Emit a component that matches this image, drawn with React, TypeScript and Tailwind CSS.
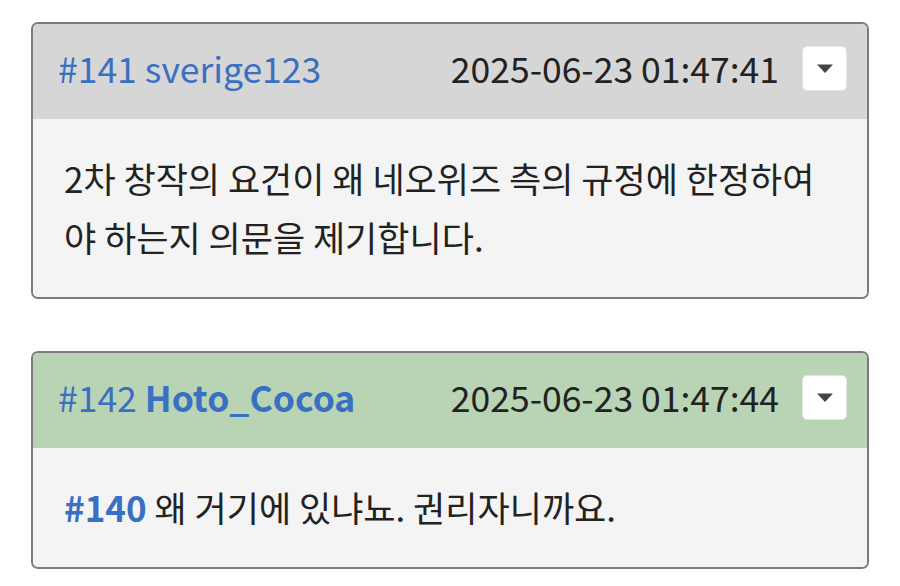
import { ReactNode } from 'react';

interface Comment {
  no: number;
  author: string;
  time: string;
  mine?: boolean;
  body: ReactNode;
}

const comments: Comment[] = [
  {
    no: 141,
    author: 'sverige123',
    time: '2025-06-23 01:47:41',
    body: '2차 창작의 요건이 왜 네오위즈 측의 규정에 한정하여야 하는지 의문을 제기합니다.',
  },
  {
    no: 142,
    author: 'Hoto_Cocoa',
    time: '2025-06-23 01:47:44',
    mine: true,
    body: (
      <>
        <a className="font-bold text-[#3a70c1]">#140</a> 왜 거기에 있냐뇨. 권리자니까요.
      </>
    ),
  },
];

function CommentCard({ c }: { c: Comment }) {
  return (
    <div className="border-2 border-[#7c7c7c] rounded-[7px] overflow-hidden">
      {/* header row */}
      <div
        className={`h-[95px] flex items-center pl-[25px] pr-[20px] pb-[7px] ${
          c.mine ? 'bg-[#b8d4b5]' : 'bg-[#d6d6d6]'
        }`}
      >
        <div className="flex-1 text-[#3a70c1] text-[35.5px]">
          <span>#{c.no}</span>{' '}
          <span className={c.mine ? 'font-bold' : ''}>{c.author}</span>
        </div>
        <div className="text-[35.5px] text-[#222]">{c.time}</div>
        <button className="ml-[23px] w-[45px] h-[45px] bg-white rounded-[5px] border border-[#e4e4e4] flex items-center justify-center">
          <svg width="18" height="11" viewBox="0 0 18 11">
            <path d="M1 1.5h16L9 10z" fill="#444" />
          </svg>
        </button>
      </div>
      {/* body */}
      <div className="bg-[#f4f4f4] px-[31px] pt-[29px] pb-[31px] text-[35px] leading-[59px] text-[#222]">
        {c.body}
      </div>
    </div>
  );
}

export default function App() {
  return (
    <div
      className="min-h-screen bg-white px-[31px] pt-[22px] flex flex-col gap-[52px]"
      style={{ fontFamily: '"Noto Sans CJK KR", "Noto Sans", sans-serif' }}
    >
      {comments.map((c) => (
        <CommentCard key={c.no} c={c} />
      ))}
    </div>
  );
}
